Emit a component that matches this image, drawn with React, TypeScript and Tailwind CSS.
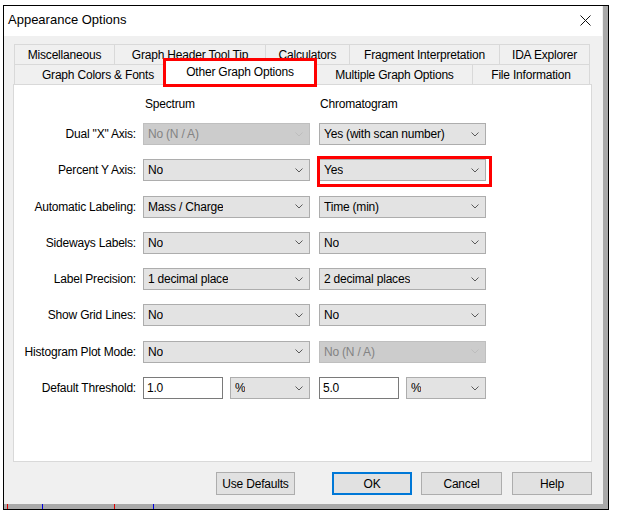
import React from 'react'

const TOP_TABS = [
  { label: 'Miscellaneous', w: 'w-[101px]' },
  { label: 'Graph Header Tool Tip', w: 'w-[151px]' },
  { label: 'Calculators', w: 'w-[84px]' },
  { label: 'Fragment Interpretation', w: 'w-[150px]' },
  { label: 'IDA Explorer', w: 'w-[90px]' },
]

function Chevron({ disabled }: { disabled?: boolean }) {
  return (
    <svg width="8" height="5" viewBox="0 0 8 5" className="shrink-0">
      <path
        d="M0.5 0.5 L4 4 L7.5 0.5"
        fill="none"
        stroke={disabled ? '#bdbdbd' : '#5a5a5a'}
        strokeWidth="1"
      />
    </svg>
  )
}

function Combo({
  value,
  disabled,
  w = 'w-[167px]',
}: {
  value: string
  disabled?: boolean
  w?: string
}) {
  return (
    <div
      className={`${w} h-[22px] flex items-center justify-between pl-[4px] pr-[6px] border ${
        disabled
          ? 'bg-[#cccccc] border-[#bfbfbf] text-[#838383]'
          : 'bg-[#e3e3e3] border-[#adadad] text-black'
      }`}
    >
      <span className="truncate">{value}</span>
      <Chevron disabled={disabled} />
    </div>
  )
}

function TextBox({ value }: { value: string }) {
  return (
    <div className="w-[80px] h-[22px] flex items-center pl-[3px] bg-white border border-[#7a7a7a]">
      {value}
    </div>
  )
}

function Row({ label, children }: { label: string; children: React.ReactNode }) {
  return (
    <div className="flex items-center h-[22px]">
      <div className="w-[122px] text-right">{label}</div>
      <div className="ml-[7px] flex gap-[9px]">{children}</div>
    </div>
  )
}

function Btn({ label, w = 'w-[80px]', primary }: { label: string; w?: string; primary?: boolean }) {
  return (
    <div
      className={`${w} h-[23px] flex items-center justify-center bg-[#e1e1e1] ${
        primary ? 'border-2 border-[#0078d7]' : 'border border-[#adadad]'
      }`}
    >
      {label}
    </div>
  )
}

export default function App() {
  return (
    <div className="w-[618px] h-[516px] bg-white overflow-hidden pt-[5px] pl-[3px] font-['Liberation_Sans',Arial,sans-serif] text-[12px] text-black leading-[14px] tracking-[-0.2px]">
      <div className="w-[606px] h-[505px] border border-black flex flex-col">
        <div className="flex h-[498px]">
          {/* dialog */}
          <div className="w-[598px] h-full bg-[#f0f0f0] flex flex-col">
            <div className="h-[30px] bg-white flex items-center justify-between pl-[4px] pr-[11px]">
              <span className="text-[13px] leading-[16px] mt-[-2px] tracking-normal">Appearance Options</span>
              <svg width="11" height="11" viewBox="0 0 11 11" className="mt-[-2px]">
                <path d="M0.5 0.5 L10.5 10.5 M10.5 0.5 L0.5 10.5" stroke="#111" strokeWidth="1" />
              </svg>
            </div>

            <div className="flex flex-col pt-[8px] pl-[9px] pr-[10px]">
              {/* tabs */}
              <div className="flex h-[20px] pl-[1px]">
                {TOP_TABS.map((t, i) => (
                  <div
                    key={t.label}
                    className={`${t.w} h-full flex items-center justify-center border-t border-r border-[#d9d9d9] ${
                      i === 0 ? 'border-l' : ''
                    }`}
                  >
                    {t.label}
                  </div>
                ))}
              </div>
              <div className="flex h-[20px] pl-[1px] items-start">
                <div className="w-[149px] h-[20px] flex items-center justify-center pl-[18px] border-t border-l border-[#d9d9d9]">
                  Graph Colors &amp; Fonts
                </div>
                <div className="relative z-10 w-[154px] h-[29px] -mt-[6px] bg-white border-[3px] border-[#ff0000] flex items-start justify-center pt-[4px]">
                  Other Graph Options
                </div>
                <div className="w-[156px] h-[20px] flex items-center justify-center border-t border-r border-[#d9d9d9]">
                  Multiple Graph Options
                </div>
                <div className="w-[117px] h-[20px] flex items-center justify-center border-t border-r border-[#d9d9d9]">
                  File Information
                </div>
              </div>

              {/* panel */}
              <div className="h-[378px] bg-white border border-[#d9d9d9] flex flex-col">
                <div className="flex mt-[12px] h-[14px]">
                  <div className="w-[131px]" />
                  <div className="w-[175px]">Spectrum</div>
                  <div>Chromatogram</div>
                </div>
                <div className="flex flex-col gap-[14.3px] mt-[12px]">
                  <Row label={'Dual "X" Axis:'}>
                    <Combo value="No (N / A)" disabled />
                    <Combo value="Yes (with scan number)" />
                  </Row>
                  <Row label="Percent Y Axis:">
                    <Combo value="No" />
                    <div className="relative">
                      <Combo value="Yes" />
                      <span className="absolute -left-[2px] -top-[3px] w-[175px] h-[31px] border-[3px] border-[#ff0000] pointer-events-none" />
                    </div>
                  </Row>
                  <Row label="Automatic Labeling:">
                    <Combo value="Mass / Charge" />
                    <Combo value="Time (min)" />
                  </Row>
                  <Row label="Sideways Labels:">
                    <Combo value="No" />
                    <Combo value="No" />
                  </Row>
                  <Row label="Label Precision:">
                    <Combo value="1 decimal place" />
                    <Combo value="2 decimal places" />
                  </Row>
                  <Row label="Show Grid Lines:">
                    <Combo value="No" />
                    <Combo value="No" />
                  </Row>
                  <Row label="Histogram Plot Mode:">
                    <Combo value="No" />
                    <Combo value="No (N / A)" disabled />
                  </Row>
                  <Row label="Default Threshold:">
                    <div className="flex gap-[7px]">
                      <TextBox value="1.0" />
                      <Combo value="%" w="w-[80px]" />
                    </div>
                    <div className="flex gap-[7px]">
                      <TextBox value="5.0" />
                      <Combo value="%" w="w-[80px]" />
                    </div>
                  </Row>
                </div>
              </div>

              {/* buttons */}
              <div className="flex mt-[10px] pl-[203px]">
                <Btn label="Use Defaults" />
                <div className="ml-[37px]">
                  <Btn label="OK" primary />
                </div>
                <div className="ml-[9px]">
                  <Btn label="Cancel" w="w-[81px]" />
                </div>
                <div className="ml-[10px]">
                  <Btn label="Help" />
                </div>
              </div>
            </div>
          </div>
          {/* window behind */}
          <div className="flex-1 bg-[#f0f0f0] flex">
            <div className="w-[1px]" />
            <div className="flex-1 bg-[#a9a9a9]" />
          </div>
        </div>
        <div className="flex-1 bg-[#a9a9a9] flex">
          <span className="ml-[3px] w-[1px] bg-[#e00000]" />
          <span className="ml-[34px] w-[1px] bg-[#0000e0]" />
          <span className="ml-[71px] w-[1px] bg-[#e00000]" />
          <span className="ml-[38px] w-[1px] bg-[#0000e0]" />
        </div>
      </div>
    </div>
  )
}
